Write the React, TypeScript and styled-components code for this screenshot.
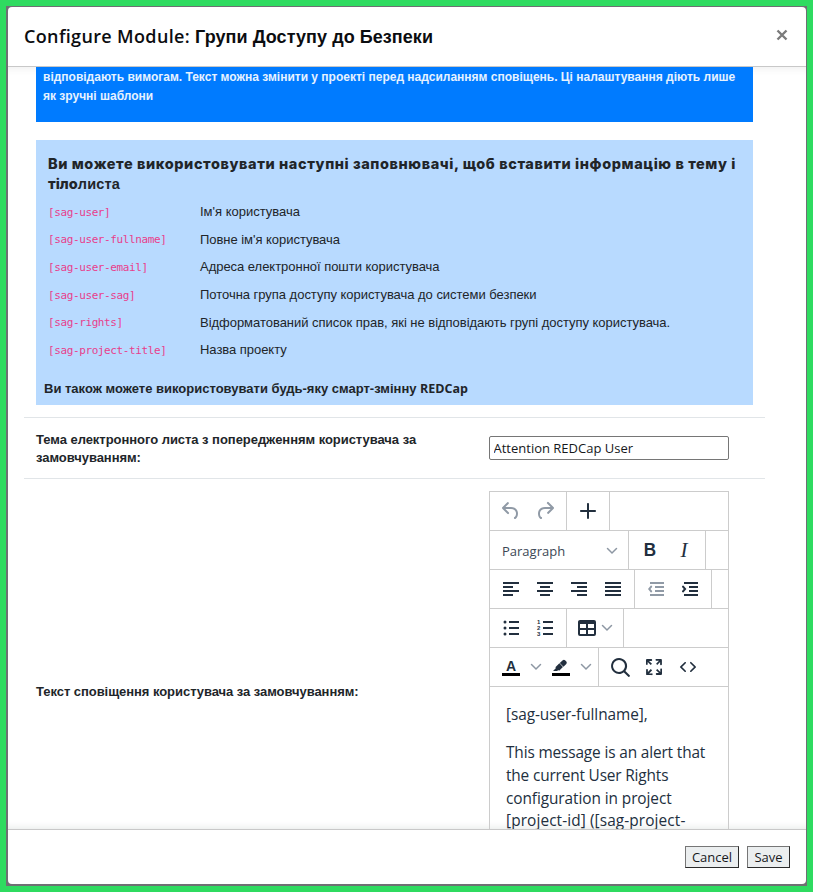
import React from "react";
import styled, { createGlobalStyle } from "styled-components";

const latin = '"Open Sans", "Noto Sans", sans-serif';
const cyrillic = '"Liberation Sans", Arial, sans-serif';

const GlobalStyle = createGlobalStyle`
  *, *::before, *::after { box-sizing: border-box; }
  html, body { margin: 0; height: 100%; overflow: hidden; }
  body { font-family: ${latin}; color: #212529; font-size: 13px; }
`;

const Frame = styled.div`
  width: 813px;
  height: 892px;
  padding: 6px;
  background: #2fdb60;
`;

const Backdrop = styled.div`
  height: 880px;
  padding: 1px 1px 2px 2px;
  background: #6f6f73;
`;

const Dialog = styled.section`
  display: flex;
  flex-direction: column;
  height: 877px;
  background: #fff;
  border-radius: 4px;
  overflow: hidden;
`;

const Header = styled.header`
  display: flex;
  justify-content: space-between;
  align-items: center;
  flex: none;
  height: 60px;
  padding: 0 18px 0 16px;
  border-bottom: 1px solid #c8c8c8;
`;

const Line = styled.span<{ $gap?: number }>`
  display: block;
  white-space: pre;
  letter-spacing: ${(p) => p.$gap ?? 0}px;
`;

const Title = styled.h1`
  display: flex;
  margin: 0;
  white-space: pre;
  font: 600 18px/27px ${latin};
  letter-spacing: 0.35px;
  color: #0b0d10;
`;

const TitleName = styled.span`
  padding-top: 1px;
  font-family: ${cyrillic};
  font-weight: 700;
  letter-spacing: 0.06px;
`;

const CloseButton = styled.button`
  display: flex;
  margin-top: -3px;
  padding: 0;
  border: 0;
  background: none;
  color: #7b7b7b;
`;

const Body = styled.main`
  flex: 1;
  min-height: 0;
  overflow: hidden;
  padding: 0 41px 0 16px;
  box-shadow: inset 0 9px 8px -8px #ececec, inset 0 -9px 8px -8px #e4e8e6;
`;

const Notice = styled.div`
  height: 55px;
  margin: 0 12px 18px;
  padding: 1px 7px 0;
  background: #007bff;
  color: #e6f2ff;
  font: 700 12px/19px ${cyrillic};
`;

const Placeholders = styled.div`
  height: 265px;
  margin: 0 12px 12px;
  padding: 14px 8px 0;
  background: #b8daff;
`;

const PlaceholdersTitle = styled.h2`
  margin: 0 0 4px 4px;
  font: 800 14.5px/20px Inter, ${cyrillic};
`;

const TitleTail = styled.span`
  font: 700 14.5px/20px ${cyrillic};
  letter-spacing: 0.2px;
`;

const PlaceholderRow = styled.div`
  display: grid;
  grid-template-columns: 152px 1fr;
  align-items: center;
  height: 27.7px;
  padding-left: 4px;
  font: 13px/18px ${cyrillic};
`;

const Code = styled.code`
  padding-top: 1.4px;
  color: #e83e8c;
  font: 11px/18px "DejaVu Sans Mono", monospace;
  letter-spacing: -0.39px;
`;

const Footnote = styled.p`
  display: flex;
  margin: 16px 0 0;
  white-space: pre;
  font: 700 13px/18px ${cyrillic};
`;

const LatinBold = styled.span`
  font: 700 12.5px/18px ${latin};
`;

const Field = styled.div<{ $height: number }>`
  display: grid;
  grid-template-columns: 453px 240px;
  grid-template-rows: 100%;
  align-items: center;
  height: ${(p) => p.$height}px;
  padding-left: 12px;
  border-top: 1px solid #e1e5e8;
`;

const Label = styled.label<{ $drop?: number }>`
  padding-top: ${(p) => p.$drop ?? 0}px;
  font: 700 13px/18px ${cyrillic};
`;

const TextInput = styled.input`
  width: 240px;
  height: 24px;
  padding: 1px 3.5px;
  border: 1px solid #767676;
  border-radius: 2px;
  color: #16181b;
  font: 13px/18px ${latin};
`;

const Editor = styled.div`
  align-self: start;
  height: 480px;
  margin-top: 12px;
  border: 1px solid #ccc;
  color: #222f3e;
`;

const ToolbarRow = styled.div`
  display: flex;
  height: 39px;
  border-bottom: 1px solid #ccc;
`;

const ToolGroup = styled.div<{ $last?: boolean }>`
  display: flex;
  padding: 0 4px;
  border-right: ${(p) => (p.$last ? 0 : 1)}px solid #ccc;
`;

const Tool = styled.button<{ $width?: number; $muted?: boolean }>`
  display: flex;
  align-items: center;
  justify-content: center;
  width: ${(p) => p.$width ?? 34}px;
  height: 38px;
  padding: 0;
  border: 0;
  background: none;
  color: ${(p) => (p.$muted ? "#909aa6" : "#222f3e")};
`;

const SplitTool = styled(Tool)`
  justify-content: flex-start;
  padding-left: 4px;
  gap: 2px;
`;

const ColorTool = styled(Tool)`
  justify-content: flex-start;
  padding-left: 8px;
  gap: 10px;
`;

const FormatSelect = styled(Tool)`
  justify-content: space-between;
  padding: 1px 6px 0 8px;
  color: #3c4755;
  font: 13px/18px ${latin};
`;

const BoldGlyph = styled.span`
  font: 700 19px/24px "Liberation Sans", sans-serif;
  transform: scaleX(0.9);
`;

const ItalicGlyph = styled.span`
  font: italic 400 21px/24px "Liberation Serif", serif;
`;

const Swatch = styled.span`
  display: flex;
  flex-direction: column;
  align-items: center;
  justify-content: flex-end;
  width: 18px;
  height: 18px;
  border-bottom: 3px solid #000;
  font: 700 14px/14px "Liberation Sans", sans-serif;
`;

const Content = styled.div`
  padding: 17px 16px 0;
  font: 15.4px/22.7px ${latin};
`;

const Paragraph = styled.p`
  margin: 0 0 15.5px;
`;

const Footer = styled.footer`
  display: flex;
  flex: none;
  justify-content: flex-end;
  height: 55px;
  padding: 16px 16px 0 0;
  gap: 8px;
  border-top: 1px solid #c8c8c8;
`;

const ActionButton = styled.button<{ $width: number }>`
  width: ${(p) => p.$width}px;
  height: 22px;
  padding: 0;
  border: 1px solid #2b2b2b;
  border-top-color: #767676;
  border-left-color: #767676;
  background: #ebeeef;
  color: #16181b;
  font: 13px/18px ${latin};
`;

const Icon = ({ d, size = 24 }: { d: string; size?: number }) => (
  <svg width={size} height={size} viewBox={`0 0 ${size} ${size}`} fill="currentColor" fillRule="evenodd">
    <path d={d} />
  </svg>
);

const paths = {
  undo: "M6.4 8H12c3.7 0 6.2 2 6.8 5.1.6 2.7-.4 5.6-2.3 6.8a1 1 0 01-1-1.8c1.1-.6 1.8-2.7 1.4-4.6-.5-2.1-2.1-3.5-4.9-3.5H6.4l3.3 3.3a1 1 0 11-1.4 1.4l-5-5a1 1 0 010-1.4l5-5a1 1 0 011.4 1.4L6.4 8z",
  redo: "M17.6 10H12c-2.8 0-4.4 1.4-4.9 3.5-.4 2 .3 4 1.4 4.6a1 1 0 11-1 1.8c-2-1.2-2.9-4.1-2.3-6.8.6-3 3-5.1 6.8-5.1h5.6l-3.3-3.3a1 1 0 111.4-1.4l5 5a1 1 0 010 1.4l-5 5a1 1 0 01-1.4-1.4l3.3-3.3z",
  plus: "M12 4c.5 0 1 .4 1 .9V11h6a1 1 0 01.1 2H13v6a1 1 0 01-2 .1V13H5a1 1 0 01-.1-2H11V5c0-.6.4-1 1-1z",
  left: "M4 5h16v2H4zm0 4h10v2H4zm0 4h16v2H4zm0 4h10v2H4z",
  center: "M4 5h16v2H4zm3 4h10v2H7zm-3 4h16v2H4zm3 4h10v2H7z",
  right: "M4 5h16v2H4zm6 4h10v2H10zm-6 4h16v2H4zm6 4h10v2H10z",
  justify: "M4 5h16v2H4zm0 4h16v2H4zm0 4h16v2H4zm0 4h16v2H4z",
  outdent: "M6 5h14v2H6zm5 4h9v2h-9zm0 4h9v2h-9zm-5 4h14v2H6zM8 10.2 6.4 12 8 13.8a1 1 0 01-1.4 1.4L4 12l2.6-3.2A1 1 0 018 10.2z",
  indent: "M6 5h14v2H6zm5 4h9v2h-9zm0 4h9v2h-9zm-5 4h14v2H6zM4.2 10.2 5.8 12l-1.6 1.8a1 1 0 001.4 1.4L8.4 12 5.6 8.8a1 1 0 00-1.4 1.4z",
  bullets: "M10 5h10v2H10zm0 6h10v2H10zm0 6h10v2H10zM6 4.5a1.5 1.5 0 110 3 1.5 1.5 0 010-3zm0 6a1.5 1.5 0 110 3 1.5 1.5 0 010-3zm0 6a1.5 1.5 0 110 3 1.5 1.5 0 010-3z",
  table: "M19 4a2 2 0 012 2v12a2 2 0 01-2 2H5a2 2 0 01-2-2V6c0-1.1.9-2 2-2h14zM5 14v4h6v-4H5zm14 0h-6v4h6v-4zm0-6h-6v4h6V8zM5 12h6V8H5v4z",
  search: "M16 17.3a8 8 0 111.4-1.4l4.3 4.4a1 1 0 01-1.4 1.4l-4.4-4.3zm-5-.3a6 6 0 100-12 6 6 0 000 12z",
  fullscreen: "M15.3 10l-1.2-1.3 2.9-3h-2.3a.9.9 0 110-1.7H19c.5 0 .9.4.9.9v4.4a.9.9 0 11-1.8 0V7l-2.9 3zm0 4l3 3v-2.3a.9.9 0 111.7 0V19c0 .5-.4.9-.9.9h-4.4a.9.9 0 110-1.8H17l-3-2.9 1.3-1.2zM10 15.4l-2.9 3h2.3a.9.9 0 110 1.7H5a.9.9 0 01-.9-.9v-4.4a.9.9 0 111.8 0V17l2.9-3 1.2 1.3zM8.7 10L5.7 7v2.3a.9.9 0 01-1.7 0V5c0-.5.4-.9.9-.9h4.4a.9.9 0 010 1.8H7l3 2.9-1.3 1.2z",
  source: "M9.8 15.7c.3.3.3.8 0 1-.3.4-.9.4-1.2 0l-4.4-4.1a.8.8 0 010-1.2l4.4-4.2c.3-.3.9-.3 1.2 0 .3.3.3.8 0 1.1L6 12l3.8 3.7zM14.2 15.7c-.3.3-.3.8 0 1 .4.4.9.4 1.2 0l4.4-4.1c.3-.3.3-.8 0-1.2l-4.4-4.2a.8.8 0 00-1.2 0c-.3.3-.3.8 0 1.1L18 12l-3.8 3.7z",
};

const Chevron = () => (
  <svg width="12" height="12" viewBox="0 0 12 12" fill="none" stroke="#8d97a3" strokeWidth="1.5" strokeLinecap="round">
    <path d="M1.5 3.5 6 8 10.5 3.5" />
  </svg>
);

const NumberedList = () => (
  <svg width="24" height="24" viewBox="0 0 24 24" fill="currentColor">
    <path d="M10 5h10v2H10zm0 6h10v2H10zm0 6h10v2H10z" />
    <g fontFamily="Liberation Sans" fontWeight="700" fontSize="6">
      <text x="4" y="8">1</text>
      <text x="4" y="14">2</text>
      <text x="4" y="20">3</text>
    </g>
  </svg>
);

const Highlighter = () => (
  <svg width="18" height="17" viewBox="3 2 18 17" fill="currentColor">
    <path d="M7.7 16.7H3l3.3-3.3-.7-.8L10.2 8l4 4.1-4 4.2c-.2.2-.6.2-.8 0l-.6-.7-1.1 1.1zM10.6 7.6l3.4-3.1a2 2 0 012.6 0L18 6c.7.7.7 2 0 2.7l-3.2 3.1z" />
  </svg>
);

const placeholders: [string, string, number][] = [
  ["[sag-user]", "Ім'я користувача", 0],
  ["[sag-user-fullname]", "Повне ім'я користувача", -0.04],
  ["[sag-user-email]", "Адреса електронної пошти користувача", -0.03],
  ["[sag-user-sag]", "Поточна група доступу користувача до системи безпеки", -0.03],
  ["[sag-rights]", "Відформатований список прав, які не відповідають групі доступу користувача.", -0.03],
  ["[sag-project-title]", "Назва проекту", -0.04],
];

export default function App() {
  return (
    <Frame>
      <GlobalStyle />
      <Backdrop>
        <Dialog>
          <Header>
            <Title>Configure Module: <TitleName>Групи Доступу до Безпеки</TitleName></Title>
            <CloseButton aria-label="Close">
              <svg width="12" height="12" viewBox="0 0 12 12" stroke="currentColor" strokeWidth="2.4">
                <path d="M1.5 1.5l9 9m0-9l-9 9" />
              </svg>
            </CloseButton>
          </Header>
          <Body>
            <Notice>
              <Line>відповідають вимогам. Текст можна змінити у проекті перед надсиланням сповіщень. Ці налаштування діють лише</Line>
              <Line>як зручні шаблони</Line>
            </Notice>
            <Placeholders>
              <PlaceholdersTitle>
                <Line $gap={0.58}>Ви можете використовувати наступні заповнювачі, щоб вставити інформацію в тему і</Line>
                <Line>тіло<TitleTail>листа</TitleTail></Line>
              </PlaceholdersTitle>
              {placeholders.map(([code, text, gap]) => (
                <PlaceholderRow key={code}>
                  <Code>{code}</Code>
                  <Line $gap={gap}>{text}</Line>
                </PlaceholderRow>
              ))}
              <Footnote>Ви також можете використовувати будь-яку смарт-змінну <LatinBold>REDCap</LatinBold></Footnote>
            </Placeholders>
            <Field $height={61}>
              <Label $drop={1}>
                <Line $gap={-0.04}>Тема електронного листа з попередженням користувача за</Line>
                <Line $gap={-0.04}>замовчуванням:</Line>
              </Label>
              <TextInput defaultValue="Attention REDCap User" />
            </Field>
            <Field $height={427}>
              <Label><Line $gap={-0.05}>Текст сповіщення користувача за замовчуванням:</Line></Label>
              <Editor>
                <ToolbarRow>
                  <ToolGroup>
                    <Tool $muted><Icon d={paths.undo} /></Tool>
                    <Tool $muted><Icon d={paths.redo} /></Tool>
                  </ToolGroup>
                  <ToolGroup><Tool><Icon d={paths.plus} /></Tool></ToolGroup>
                </ToolbarRow>
                <ToolbarRow>
                  <ToolGroup><FormatSelect $width={130}>Paragraph<Chevron /></FormatSelect></ToolGroup>
                  <ToolGroup>
                    <Tool><BoldGlyph>B</BoldGlyph></Tool>
                    <Tool><ItalicGlyph>I</ItalicGlyph></Tool>
                  </ToolGroup>
                </ToolbarRow>
                <ToolbarRow>
                  <ToolGroup>
                    <Tool><Icon d={paths.left} /></Tool>
                    <Tool><Icon d={paths.center} /></Tool>
                    <Tool><Icon d={paths.right} /></Tool>
                    <Tool><Icon d={paths.justify} /></Tool>
                  </ToolGroup>
                  <ToolGroup>
                    <Tool $muted><Icon d={paths.outdent} /></Tool>
                    <Tool><Icon d={paths.indent} /></Tool>
                  </ToolGroup>
                </ToolbarRow>
                <ToolbarRow>
                  <ToolGroup>
                    <Tool><Icon d={paths.bullets} /></Tool>
                    <Tool><NumberedList /></Tool>
                  </ToolGroup>
                  <ToolGroup><SplitTool $width={48}><Icon d={paths.table} /><Chevron /></SplitTool></ToolGroup>
                </ToolbarRow>
                <ToolbarRow>
                  <ToolGroup>
                    <ColorTool $width={50}><Swatch>A</Swatch><Chevron /></ColorTool>
                    <ColorTool $width={50}><Swatch><Highlighter /></Swatch><Chevron /></ColorTool>
                  </ToolGroup>
                  <ToolGroup $last>
                    <Tool><Icon d={paths.search} /></Tool>
                    <Tool><Icon d={paths.fullscreen} /></Tool>
                    <Tool><Icon d={paths.source} /></Tool>
                  </ToolGroup>
                </ToolbarRow>
                <Content>
                  <Paragraph><Line $gap={-0.08}>[sag-user-fullname],</Line></Paragraph>
                  <Paragraph>
                    <Line $gap={-0.14}>This message is an alert that</Line>
                    <Line $gap={-0.16}>the current User Rights</Line>
                    <Line $gap={-0.08}>configuration in project</Line>
                    <Line $gap={0.1}>[project-id] ([sag-project-</Line>
                  </Paragraph>
                </Content>
              </Editor>
            </Field>
          </Body>
          <Footer>
            <ActionButton $width={54}>Cancel</ActionButton>
            <ActionButton $width={43}>Save</ActionButton>
          </Footer>
        </Dialog>
      </Backdrop>
    </Frame>
  );
}
